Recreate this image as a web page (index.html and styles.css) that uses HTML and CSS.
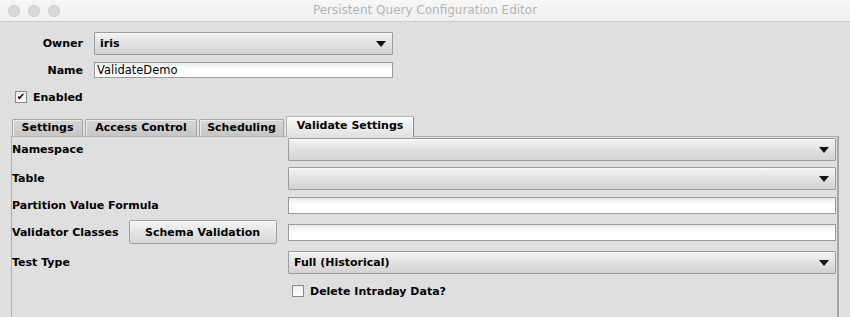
FILE: index.html
```html
<!DOCTYPE html>
<html lang="en">
<head>
  <meta charset="UTF-8">
  <title>Persistent Query Configuration Editor</title>
  <link rel="stylesheet" href="styles.css">
</head>
<body>
  <div class="window">
    <div class="titlebar">
      <div class="lights">
        <span class="light"></span>
        <span class="light"></span>
        <span class="light"></span>
      </div>
      <div class="title">Persistent Query Configuration Editor</div>
    </div>

    <div class="content">
      <div class="form-row owner-row">
        <label class="form-label">Owner</label>
        <div class="combo combo-owner"><span class="combo-text">iris</span><span class="arrow"></span></div>
      </div>
      <div class="form-row name-row">
        <label class="form-label">Name</label>
        <div class="textfield">ValidateDemo</div>
      </div>
      <div class="check-row enabled-row">
        <span class="checkbox checked">&#x2714;</span>
        <span class="check-label">Enabled</span>
      </div>

      <div class="tabs">
        <div class="tab tab-settings">Settings</div>
        <div class="tab tab-access">Access Control</div>
        <div class="tab tab-schedule">Scheduling</div>
        <div class="tab tab-validate active">Validate Settings</div>
      </div>

      <div class="tab-panel">
        <div class="panel-row row-namespace">
          <div class="row-label">Namespace</div>
          <div class="combo"><span class="combo-text"></span><span class="arrow"></span></div>
        </div>
        <div class="panel-row row-table">
          <div class="row-label">Table</div>
          <div class="combo"><span class="combo-text"></span><span class="arrow"></span></div>
        </div>
        <div class="panel-row row-formula">
          <div class="row-label">Partition Value Formula</div>
          <div class="textfield wide"></div>
        </div>
        <div class="panel-row row-classes">
          <div class="row-label">Validator Classes <button class="button">Schema Validation</button></div>
          <div class="textfield wide"></div>
        </div>
        <div class="panel-row row-testtype">
          <div class="row-label">Test Type</div>
          <div class="combo"><span class="combo-text">Full (Historical)</span><span class="arrow"></span></div>
        </div>
        <div class="panel-row row-delete">
          <div class="row-label"></div>
          <div class="check-row">
            <span class="checkbox"></span>
            <span class="check-label">Delete Intraday Data?</span>
          </div>
        </div>
      </div>
    </div>
  </div>
</body>
</html>
```

FILE: styles.css
```css
html, body {
  margin: 0;
  padding: 0;
}
body {
  width: 850px;
  height: 317px;
  overflow: hidden;
  background: #dfdfdf;
  font-family: "DejaVu Sans", Verdana, sans-serif;
  font-size: 11px;
  color: #000;
}
.window {
  height: 317px;
  display: flex;
  flex-direction: column;
}

/* title bar */
.titlebar {
  height: 21px;
  background: linear-gradient(#f7f7f7, #f0f0f0);
  border-bottom: 1px solid #cbcbcb;
  display: flex;
  align-items: center;
  position: relative;
}
.lights {
  display: flex;
  gap: 8px;
  padding-left: 8px;
}
.light {
  width: 10px;
  height: 10px;
  border-radius: 50%;
  background: #d9d9d9;
  border: 1px solid #cdcdcd;
}
.title {
  position: absolute;
  left: 0;
  right: 0;
  text-align: center;
  color: #b4b4b4;
  font-size: 12px;
  top: 3px;
}

/* top form */
.content {
  flex: 1;
  display: flex;
  flex-direction: column;
}
.form-row {
  display: flex;
  align-items: center;
}
.owner-row {
  margin-top: 10px;
  height: 23px;
}
.name-row {
  margin-top: 7px;
  height: 16px;
}
.form-label {
  width: 83px;
  margin-right: 11px;
  text-align: right;
  font-weight: bold;
}
.combo {
  box-sizing: border-box;
  height: 23px;
  border: 1px solid #9c9c9c;
  border-radius: 1px;
  background: linear-gradient(#f4f4f4, #e4e4e4 45%, #d2d2d2);
  box-shadow: inset 0 1px 0 #fbfbfb;
  display: flex;
  align-items: center;
  font-weight: bold;
}
.combo-owner {
  width: 299px;
}
.combo-text {
  flex: 1;
  padding-left: 5px;
}
.arrow {
  width: 0;
  height: 0;
  border-left: 5px solid transparent;
  border-right: 5px solid transparent;
  border-top: 6px solid #111;
  margin-right: 6px;
}
.textfield {
  box-sizing: border-box;
  width: 299px;
  height: 16px;
  border: 1px solid #9a9a9a;
  background: linear-gradient(#e9e9e9, #ffffff 40%);
  font-size: 11.5px;
  line-height: 14px;
  padding-left: 2px;
}
.textfield.wide {
  width: 548px;
  height: 17px;
}

.check-row {
  display: flex;
  align-items: center;
}
.enabled-row {
  margin-top: 13px;
  padding-left: 15px;
  height: 12px;
}
.checkbox {
  box-sizing: border-box;
  width: 12px;
  height: 12px;
  border: 1px solid #8a8a8a;
  background: linear-gradient(#f0f0f0, #ffffff);
  font-size: 10px;
  line-height: 10px;
  text-align: center;
  margin-right: 6px;
}
.check-label {
  font-weight: bold;
}

/* tabs */
.tabs {
  display: flex;
  align-items: flex-end;
  gap: 2px;
  padding-left: 12px;
  margin-top: 13px;
  height: 20px;
}
.tab {
  box-sizing: border-box;
  height: 17px;
  border: 1px solid #a6a6a6;
  border-bottom: none;
  border-radius: 2px 2px 0 0;
  background: linear-gradient(#d6d6d6, #c6c6c6);
  box-shadow: inset 1px 1px 0 #ececec;
  font-weight: bold;
  text-align: center;
  line-height: 16px;
}
.tab-settings { width: 71px; }
.tab-access { width: 112px; }
.tab-schedule { width: 85px; }
.tab-validate { width: 128px; }
.tab.active {
  height: 21px;
  margin-bottom: -1px;
  position: relative;
  z-index: 1;
  background: linear-gradient(#fafafa, #e6e6e6 80%, #dfdfdf);
  box-shadow: none;
  line-height: 17px;
  border-color: #b4b4b4;
  border-right-color: #8c8c8c;
}

.tab-panel {
  flex: 1;
  margin-left: 11px;
  width: 828px;
  box-sizing: border-box;
  border: 1px solid #b0b0b0;
  border-bottom: none;
  border-right: 2px solid #a6a6a6;
  display: flex;
  flex-direction: column;
}
.panel-row {
  display: flex;
  align-items: center;
}
.row-label {
  width: 276px;
  font-weight: bold;
  display: flex;
  align-items: center;
}
.panel-row .combo {
  width: 548px;
}
.row-namespace { margin-top: 1px; height: 23px; }
.row-table { margin-top: 6px; height: 23px; }
.row-formula { margin-top: 3px; height: 24px; }
.row-classes { margin-top: 3px; height: 24px; }
.row-testtype { margin-top: 7px; height: 23px; }
.row-delete { margin-top: 6px; height: 22px; }
.row-delete .check-row {
  padding-left: 4px;
}

.button {
  box-sizing: border-box;
  margin-left: 10px;
  width: 148px;
  height: 24px;
  border: 1px solid #a0a0a0;
  border-radius: 2px;
  background: linear-gradient(#f6f6f6, #e4e4e4 50%, #d6d6d6);
  box-shadow: inset 0 1px 0 #ffffff;
  font-family: inherit;
  font-size: 11px;
  font-weight: bold;
  color: #000;
  padding: 0;
}
```
